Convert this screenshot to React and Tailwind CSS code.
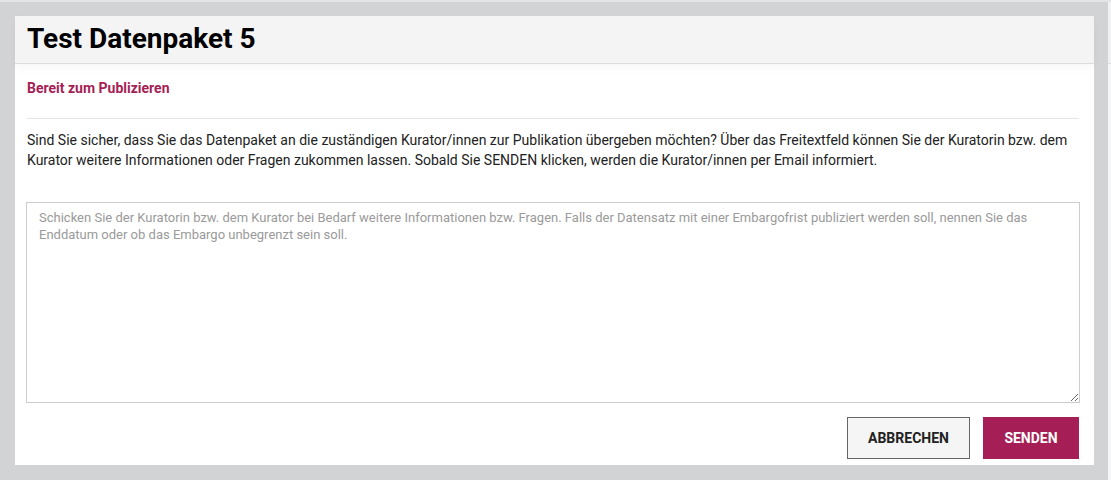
export default function App() {
  return (
    <div className="h-[480px] w-full overflow-hidden bg-[#d2d3d5] border-t-2 border-[#e3e4e5] flex font-['Roboto',sans-serif]">
      <div className="flex-1 pl-[15px] pt-[14px] pr-[14px]">
        <div className="w-[1079px] h-[449px] bg-white flex flex-col">
          {/* Header */}
          <div className="h-[48px] shrink-0 bg-[#f4f4f4] border-b border-[#dddddd] pl-[12px] flex items-center shadow-[0_4px_8px_rgba(0,0,0,0.035)] relative">
            <h1 className="text-[28px] leading-none font-bold text-black pb-[2px]">Test Datenpaket 5</h1>
          </div>

          {/* Body */}
          <div className="pl-[12px] pr-[15px] flex flex-col">
            <p className="mt-[14px] text-[14px] leading-[20px] font-bold text-[#a51e55]">Bereit zum Publizieren</p>
            <div className="mt-[20px] border-t border-[#e6e6e6]" />
            <p className="mt-[11px] pr-[4px] text-[14px] leading-[20px] text-[#222222]">
              Sind Sie sicher, dass Sie das Datenpaket an die zuständigen Kurator/innen zur Publikation übergeben möchten? Über das Freitextfeld können Sie der Kuratorin bzw. dem Kurator weitere Informationen oder Fragen zukommen lassen. Sobald Sie SENDEN klicken, werden die Kurator/innen per Email informiert.
            </p>
            <textarea
              className="mt-[32px] -ml-px w-[1054px] h-[201px] border border-[#cccccc] px-[12px] pt-[6px] text-[13px] leading-[17px] text-[#333333] placeholder:text-[#9a9a9a] outline-none font-['Roboto',sans-serif]"
              placeholder="Schicken Sie der Kuratorin bzw. dem Kurator bei Bedarf weitere Informationen bzw. Fragen. Falls der Datensatz mit einer Embargofrist publiziert werden soll, nennen Sie das Enddatum oder ob das Embargo unbegrenzt sein soll."
            />
            <div className="mt-[14px] flex justify-end gap-[13px]">
              <button className="w-[123px] h-[42px] border border-[#666666] bg-[#f5f5f5] text-[14px] font-bold text-[#222222] uppercase">
                Abbrechen
              </button>
              <button className="w-[96px] h-[42px] bg-[#a51e55] text-[14px] font-bold text-white uppercase">
                Senden
              </button>
            </div>
          </div>
        </div>
      </div>
      <div className="w-[3px] shrink-0 flex flex-col">
        <div className="h-[61px] bg-[#f1f1f1]" />
        <div className="h-px bg-[#dddddd]" />
        <div className="flex-1 bg-[#f7f7f7]" />
      </div>
    </div>
  );
}
